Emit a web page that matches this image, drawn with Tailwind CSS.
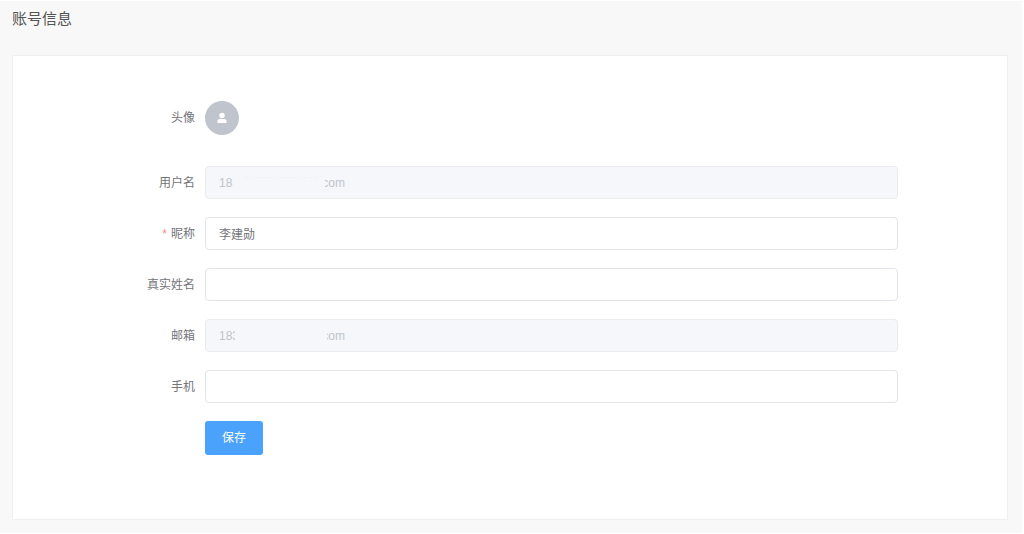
<!DOCTYPE html>
<html lang="zh-CN">

<head>
    <meta charset="utf-8">
    <meta name="viewport" content="width=device-width, initial-scale=1">
    <title>账号信息</title>
    <script src="https://cdn.jsdelivr.net/npm/@tailwindcss/browser@4"></script>
</head>

<body class="bg-white pt-px pb-px pr-0.5 min-h-screen flex flex-col font-['Liberation_Sans','Noto_Sans_CJK_SC',sans-serif]">
    <main class="grow bg-[#f8f8f8] pl-3 pr-[14px] pb-[13px]">
        <h1 class="text-[15px] leading-9 text-[#555555]">账号信息</h1>

        <form class="mt-[18px] bg-white border border-[#f0f0f0] pl-[108px] pr-[109px] pt-[45px] pb-16 text-xs text-[#737579]">
            <div class="flex items-center mb-[31px]">
                <span class="w-[84px] pr-2.5 text-right shrink-0">头像</span>
                <button type="button" aria-label="头像"
                    class="size-[34px] rounded-full bg-[#c0c4cc] flex items-center justify-center">
                    <svg class="size-3 text-white" viewBox="0 0 12 12" fill="currentColor">
                        <circle cx="6" cy="3.5" r="2.7" />
                        <path d="M1.4 10.9V9.4C1.4 8 2.4 7.1 3.8 7.1H8.2C9.6 7.1 10.6 8 10.6 9.4V10.9Z" />
                    </svg>
                </button>
            </div>

            <div class="flex flex-col gap-[18px]">
                <div class="flex items-center">
                    <label for="username" class="w-[84px] pr-2.5 text-right shrink-0">用户名</label>
                    <div class="relative grow">
                        <input id="username" type="text" disabled
                            value="18&nbsp;&nbsp;&nbsp;&nbsp;&nbsp;&nbsp;&nbsp;&nbsp;&nbsp;&nbsp;&nbsp;&nbsp;&nbsp;&nbsp;&nbsp;&nbsp;&nbsp;&nbsp;&nbsp;&nbsp;&nbsp;&nbsp;&nbsp;&nbsp;&nbsp;&nbsp;&nbsp;com"
                            class="block w-full h-[33px] px-[13px] rounded border border-[#e9ebf0] bg-[#f5f7fa] text-[#c0c4cc]">
                        <!-- masked part of the account -->
                        <span class="absolute left-[28px] top-3 w-[92px] h-3 bg-[#f5f7fa]"></span>
                        <span class="absolute left-[40px] top-[11px] w-[72px] border-t border-dashed border-[#f0f2f6]"></span>
                    </div>
                </div>

                <div class="flex items-center">
                    <label for="nickname" class="w-[84px] pr-2.5 text-right shrink-0"><span
                            class="text-[#f78989] mr-1">*</span>昵称</label>
                    <input id="nickname" type="text" value="李建勋" required
                        class="grow h-[33px] px-[13px] rounded border border-[#e2e4ea] bg-white">
                </div>

                <div class="flex items-center">
                    <label for="realname" class="w-[84px] pr-2.5 text-right shrink-0">真实姓名</label>
                    <input id="realname" type="text" class="grow h-[33px] px-[13px] rounded border border-[#e2e4ea] bg-white">
                </div>

                <div class="flex items-center">
                    <label for="email" class="w-[84px] pr-2.5 text-right shrink-0">邮箱</label>
                    <div class="relative grow">
                        <input id="email" type="text" disabled
                            value="183&nbsp;&nbsp;&nbsp;&nbsp;&nbsp;&nbsp;&nbsp;&nbsp;&nbsp;&nbsp;&nbsp;&nbsp;&nbsp;&nbsp;&nbsp;&nbsp;&nbsp;&nbsp;&nbsp;&nbsp;&nbsp;&nbsp;&nbsp;&nbsp;&nbsp;com"
                            class="block w-full h-[33px] px-[13px] rounded border border-[#e9ebf0] bg-[#f5f7fa] text-[#c0c4cc]">
                        <span class="absolute left-[30px] top-2.5 w-[92px] h-3.5 bg-[#f5f7fa]"></span>
                    </div>
                </div>

                <div class="flex items-center">
                    <label for="phone" class="w-[84px] pr-2.5 text-right shrink-0">手机</label>
                    <input id="phone" type="tel" class="grow h-[33px] px-[13px] rounded border border-[#e2e4ea] bg-white">
                </div>

                <div class="pl-[84px]">
                    <button type="submit" class="block w-[58px] h-[34px] rounded-[3px] bg-[#4aa2fc] text-white">保存</button>
                </div>
            </div>
        </form>
    </main>
</body>

</html>
